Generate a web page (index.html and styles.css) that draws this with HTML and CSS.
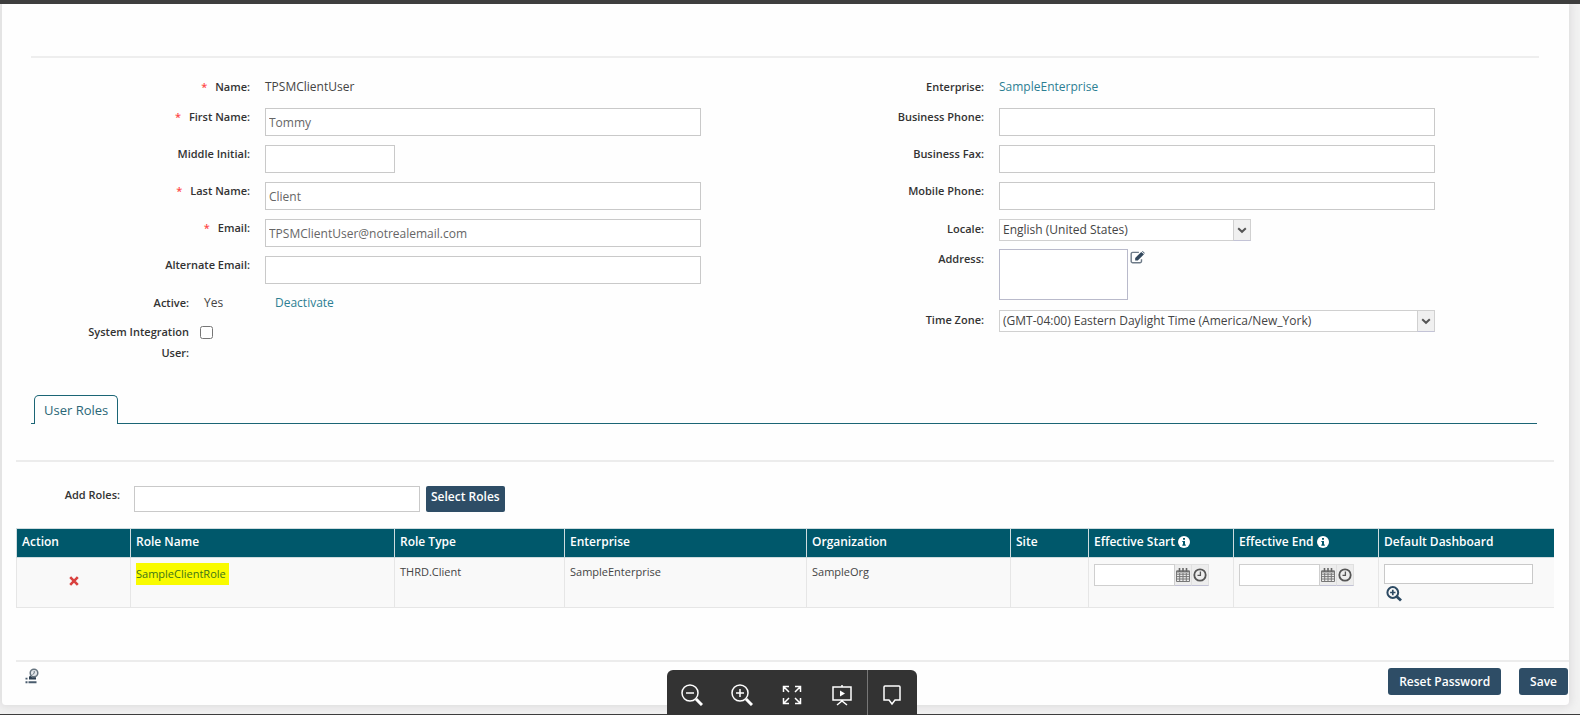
FILE: index.html
```html
<!DOCTYPE html>
<html lang="en">
<head>
<meta charset="utf-8">
<title>User Details</title>
<meta name="viewport" content="width=device-width, initial-scale=1">
<link rel="stylesheet" href="styles.css">
</head>
<body>
<main class="panel">
  <form class="details">
    <div class="column">
      <div class="row row-text"><span class="label"><span class="req">*</span>Name:</span><span class="value">TPSMClientUser</span></div>
      <div class="row"><label class="label" for="first"><span class="req">*</span>First Name:</label><input class="text" id="first" type="text" value="Tommy"></div>
      <div class="row"><label class="label" for="middle">Middle Initial:</label><input class="text text-short" id="middle" type="text"></div>
      <div class="row"><label class="label" for="last"><span class="req">*</span>Last Name:</label><input class="text" id="last" type="text" value="Client"></div>
      <div class="row"><label class="label" for="email"><span class="req">*</span>Email:</label><input class="text" id="email" type="text" value="TPSMClientUser@notrealemail.com"></div>
      <div class="row"><label class="label" for="alt">Alternate Email:</label><input class="text" id="alt" type="text"></div>
      <div class="row row-narrow row-active"><span class="label">Active:</span><span class="value status"><span>Yes</span><a class="link" href="#">Deactivate</a></span></div>
      <div class="row row-narrow row-check"><label class="label" for="sys">System Integration User:</label><input class="check" id="sys" type="checkbox"></div>
    </div>
    <div class="column">
      <div class="row row-text"><span class="label">Enterprise:</span><a class="link value" href="#">SampleEnterprise</a></div>
      <div class="row"><label class="label" for="phone">Business Phone:</label><input class="text" id="phone" type="text"></div>
      <div class="row"><label class="label" for="fax">Business Fax:</label><input class="text" id="fax" type="text"></div>
      <div class="row"><label class="label" for="mobile">Mobile Phone:</label><input class="text" id="mobile" type="text"></div>
      <div class="row row-select"><label class="label" for="locale">Locale:</label>
        <div class="select select-short"><select id="locale"><option>English (United States)</option></select><span class="arrow"><svg viewBox="0 0 10 7" width="10" height="7"><path d="M1.2 1.2 5 4.8 8.8 1.2"/></svg></span></div></div>
      <div class="row row-address"><label class="label" for="address">Address:</label>
        <div class="address"><textarea id="address"></textarea>
          <button class="icon" type="button" aria-label="Edit address"><svg viewBox="0 0 16 14" width="15" height="13"><path d="M9.5 1.5H3A1.7 1.7 0 0 0 1.200 3.200V11A1.700 1.700 0 0 0 3 12.700H10.500A1.700 1.700 0 0 0 12.300 11V9" fill="none" stroke="#6d7a87" stroke-width="1.500"/><path d="M5.500 10.200V7.500L12 1 15 3.600 8.300 10.200ZM12.800.300 13.500 0 15.800 2.200 15.500 2.900Z" fill="#34495e"/></svg></button></div></div>
      <div class="row row-select"><label class="label" for="zone">Time Zone:</label>
        <div class="select"><select id="zone"><option>(GMT-04:00) Eastern Daylight Time (America/New_York)</option></select><span class="arrow"><svg viewBox="0 0 10 7" width="10" height="7"><path d="M1.2 1.2 5 4.8 8.8 1.2"/></svg></span></div></div>
    </div>
  </form>

  <nav class="tabs"><button class="tab" type="button">User Roles</button></nav>

  <section class="roles">
    <div class="add">
      <label class="add-label" for="roles">Add Roles:</label>
      <input class="text add-input" id="roles" type="text">
      <button class="button button-tight" type="button">Select Roles</button>
    </div>
    <table class="grid">
      <colgroup><col class="c-action"><col class="c-role"><col class="c-type"><col class="c-ent"><col class="c-org"><col class="c-site"><col class="c-date"><col class="c-date"><col class="c-dash"></colgroup>
      <thead><tr>
        <th>Action</th><th>Role Name</th><th>Role Type</th><th>Enterprise</th><th>Organization</th><th>Site</th>
        <th>Effective Start <svg class="info" viewBox="0 0 12 12" width="12" height="12"><circle cx="6" cy="6" r="6" fill="#fff"/><path d="M5 2h2v1.700H5ZM4.300 4.900H7V8.500H7.800V9.700H4.300V8.500H5V6H4.300Z" fill="#00586b"/></svg></th>
        <th>Effective End <svg class="info" viewBox="0 0 12 12" width="12" height="12"><circle cx="6" cy="6" r="6" fill="#fff"/><path d="M5 2h2v1.700H5ZM4.300 4.900H7V8.500H7.800V9.700H4.300V8.500H5V6H4.300Z" fill="#00586b"/></svg></th>
        <th>Default Dashboard</th>
      </tr></thead>
      <tbody><tr>
        <td class="center"><button class="icon" type="button" aria-label="Remove role"><svg viewBox="0 0 10 10" width="10" height="10"><path d="M1.200 1.200 8.800 8.800M8.800 1.200 1.200 8.800" stroke="#d9413f" stroke-width="2.600"/></svg></button></td>
        <td><a class="marked" href="#">SampleClientRole</a></td>
        <td>THRD.Client</td>
        <td>SampleEnterprise</td>
        <td>SampleOrg</td>
        <td></td>
        <td><div class="date"><input type="text" aria-label="Effective start"><button type="button" aria-label="Pick start date"><svg viewBox="0 0 14 14" width="14" height="14"><path d="M.5 3H13.500V13.500H.5ZM.5 6.200H13.500M.5 8.600H13.500M.5 11H13.500M3.700 5V13.500M7 5V13.500M10.300 5V13.500" fill="none" stroke="#777"/><path d="M.5 2.500H13.500V4.500H.5Z" fill="#777"/><path d="M3.500 0V4M7 0V4M10.500 0V4" stroke="#666" stroke-width="1.600"/></svg></button><button type="button" aria-label="Pick start time"><svg viewBox="0 0 14 14" width="14" height="14"><circle cx="7" cy="7" r="5.700" fill="none" stroke="#555" stroke-width="1.800"/><path d="M7.400 3.500V7.400H4.500" fill="none" stroke="#555" stroke-width="1.300"/></svg></button></div></td>
        <td><div class="date"><input type="text" aria-label="Effective end"><button type="button" aria-label="Pick end date"><svg viewBox="0 0 14 14" width="14" height="14"><path d="M.5 3H13.500V13.500H.5ZM.5 6.200H13.500M.5 8.600H13.500M.5 11H13.500M3.700 5V13.500M7 5V13.500M10.300 5V13.500" fill="none" stroke="#777"/><path d="M.5 2.500H13.500V4.500H.5Z" fill="#777"/><path d="M3.500 0V4M7 0V4M10.500 0V4" stroke="#666" stroke-width="1.600"/></svg></button><button type="button" aria-label="Pick end time"><svg viewBox="0 0 14 14" width="14" height="14"><circle cx="7" cy="7" r="5.700" fill="none" stroke="#555" stroke-width="1.800"/><path d="M7.400 3.500V7.400H4.500" fill="none" stroke="#555" stroke-width="1.300"/></svg></button></div></td>
        <td><div class="dash"><input type="text" aria-label="Default dashboard"><button class="icon" type="button" aria-label="Find dashboard"><svg viewBox="0 0 16 16" width="16" height="16"><circle cx="6.800" cy="6.500" r="5.400" fill="none" stroke="#2c4a63" stroke-width="2"/><path d="M6.800 3.800V9.200M4.100 6.500H9.500" stroke="#2c4a63" stroke-width="1.700"/><path d="M10.700 10.500 15 14.600" stroke="#2c4a63" stroke-width="2.800"/></svg></button></div></td>
      </tr></tbody>
    </table>
  </section>

  <footer class="footer">
    <button class="icon" type="button" aria-label="Audit history"><svg viewBox="0 0 14 16" width="14" height="16"><circle cx="9" cy="5" r="3.800" fill="#e3e6ea" stroke="#66747f" stroke-width="1.500"/><path d="M9.200 3V5.300L7.500 6.500" fill="none" stroke="#66747f"/><path d="M5 7.500 7 9.300H11V11.500H4V9Z" fill="#2c3e50"/><path d="M.5 9.800H2.500V11.500H.5ZM.5 13.300H2.500V15.200H.5ZM3.500 13.300H11.500V15.200H3.500Z" fill="#4a5c6e"/></svg></button>
    <div class="actions"><button class="button" type="button">Reset Password</button><button class="button" type="button">Save</button></div>
  </footer>
</main>

<div class="viewer">
  <div class="viewer-bar">
    <button type="button" aria-label="Zoom out"><svg viewBox="0 0 22 22" width="22" height="22"><circle cx="9" cy="9" r="8"/><path d="M5 9H13"/><path class="thick" d="M15 15 21 21"/></svg></button>
    <button type="button" aria-label="Zoom in"><svg viewBox="0 0 22 22" width="22" height="22"><circle cx="9" cy="9" r="8"/><path d="M5 9H13M9 5V13"/><path class="thick" d="M15 15 21 21"/></svg></button>
    <button type="button" aria-label="Full screen"><svg viewBox="0 0 22 22" width="22" height="22"><path d="M2.500 8V2.500H8M2.500 2.500 8 8M14 2.500H19.500V8M19.500 2.500 14 8M2.500 14V19.500H8M2.500 19.500 8 14M14 19.500H19.500V14M19.500 19.500 14 14"/></svg></button>
    <button type="button" aria-label="Present"><svg viewBox="0 0 22 22" width="22" height="22"><path d="M2 3H20V16H2ZM11 1V3M11 16V17M6 21 11 17 16 21"/><path class="solid" d="M9 6.500 14 9.500 9 12.500Z"/></svg></button>
    <button class="divided" type="button" aria-label="Comment"><svg viewBox="0 0 22 22" width="22" height="22"><path d="M4 2H18A1 1 0 0 1 19 3V16H14L11 20 8 16H3V3A1 1 0 0 1 4 2Z"/></svg></button>
  </div>
</div>
</body>
</html>
```
FILE: styles.css
```css
* { box-sizing: border-box; }

body {
  margin: 0;
  min-height: 100vh;
  padding: 0 11px 9px 1px;
  border-top: 4px solid #3e3e3e;
  border-bottom: 1px solid #3e3e3e;
  background: #f2f2f2;
  color: #444;
  font: 12px/18px "Open Sans", "Noto Sans", sans-serif;
}

input, select, textarea, button { font: inherit; color: inherit; margin: 0; }
button { cursor: pointer; }
a { text-decoration: none; }
svg { display: block; }

.panel {
  padding-top: 52px;
  background: #fefefe;
  border-left: 1px solid #e4e4e4;
  border-radius: 0 0 4px 4px;
  box-shadow: 0 0 8px 2px #dddcdd;
}

.details {
  display: grid;
  grid-template-columns: 1fr 1fr;
  margin: 0 30px 0 29px;
  padding: 20px 40px 32px 0;
  border-top: 2px solid #eee;
}

.row {
  display: grid;
  grid-template-columns: 219px minmax(0, 1fr);
  column-gap: 15px;
  align-items: start;
  min-height: 37px;
  padding-right: 64px;
}
.row-text { min-height: 29px; }
.row-narrow { grid-template-columns: 158px minmax(0, 1fr); }
.row-active { min-height: 29px; padding-top: 2px; }
.row-check { min-height: 42px; column-gap: 11px; }
.row-select { min-height: 30px; }
.row-address { min-height: 61px; }

.label { justify-self: end; max-width: 118px; text-align: right; font-size: 11px; line-height: 20px; font-weight: 600; color: #333; }
.row-text .label, .row-active .label { line-height: 18px; }
.row-select .label, .row-address .label { line-height: 22px; }
.row-check .label { line-height: 21px; }
.req { margin-right: 8px; color: #ff4a4a; }
.status { display: grid; grid-template-columns: 71px auto; }
.link { color: #2d7f93; }

.text {
  width: 100%;
  height: 28px;
  margin-top: 1px;
  padding: 0 3px;
  border: 1px solid #c9c9c9;
  background: #fff;
  color: #666;
}
.text-short { width: 130px; }
.check { width: 13px; height: 13px; margin-top: 5px; }

.select { position: relative; height: 22px; margin-top: 1px; }
.select-short { width: 252px; }
.select select {
  width: 100%;
  height: 22px;
  padding: 0 20px 0 3px;
  border: 1px solid #d0d0d0;
  border-radius: 0;
  background: #fff;
  appearance: none;
}
.arrow {
  position: absolute;
  top: 0;
  right: 0;
  display: grid;
  place-items: center;
  width: 18px;
  height: 22px;
  border: 1px solid #d0d0d0;
  border-bottom-color: #c3c3d6;
  background: #f0f0f0;
  pointer-events: none;
}
.arrow path { fill: none; stroke: #555; stroke-width: 2; }

.address { display: flex; align-items: flex-start; gap: 2px; margin-top: 1px; }
.address textarea { width: 129px; height: 51px; border: 1px solid #b9bacb; background: #fff; resize: none; }
.icon { padding: 0; border: 0; background: none; }
.address .icon { padding-top: 2px; }

.tabs { display: flex; margin: 0 32px 0 29px; padding-left: 3px; border-bottom: 1px solid #1b6575; }
.tab {
  height: 29px;
  margin-bottom: -1px;
  padding: 0 9px;
  border: 1px solid #1b6575;
  border-bottom: 0;
  border-radius: 5px 5px 0 0;
  background: #fefefe;
  color: #2a6676;
  font-size: 13px;
  font-weight: 500;
}

.roles { margin: 36px 15px 0 14px; border-top: 2px solid #ececec; }
.add { display: flex; align-items: flex-start; gap: 6px; padding-top: 24px; }
.add-label { width: 104px; margin-right: 8px; text-align: right; font-size: 11px; font-weight: 600; color: #333; }
.add-input { width: 286px; height: 26px; margin-top: 0; }

.button {
  height: 27px;
  padding: 0 11px;
  border: 0;
  border-radius: 3px;
  background: #2e4d66;
  color: #fff;
  font-weight: 600;
}
.button-tight { height: 26px; padding: 0 5px 4px; border-radius: 2px; }

.grid { width: 100%; margin-top: 16px; border-collapse: collapse; table-layout: fixed; }
.c-action { width: 114px; }
.c-role { width: 264px; }
.c-type { width: 170px; }
.c-ent { width: 242px; }
.c-org { width: 204px; }
.c-site { width: 78px; }
.c-date { width: 145px; }
.grid th, .grid td { padding: 4px 5px; border: 1px solid #e2e2e2; text-align: left; vertical-align: top; }
.grid th { height: 29px; border-color: #cfdcdf; background: #00586b; color: #fff; font-weight: 600; font-size: 12px; white-space: nowrap; }
.grid td { height: 50px; padding-top: 5px; border-color: #e6e6e6; background: #f9f9f9; font-size: 11px; }
.grid th:last-child, .grid td:last-child { border-right: 0; }
.grid .center { padding-bottom: 6px; text-align: center; vertical-align: middle; }
.info { display: inline-block; vertical-align: -2px; }
.marked { display: inline-block; height: 22px; padding: 2px 3px 2px 0; background: #f9fb00; color: #3d7519; }

.date { display: flex; margin-top: 1px; }
.date input { width: 81px; height: 22px; border: 1px solid #cfcfcf; background: #fff; }
.date button {
  display: grid;
  place-items: center;
  width: 17px;
  height: 22px;
  padding: 0;
  border: 1px solid #e0e0e0;
  border-left: 0;
  border-bottom-color: #c3c3d6;
  background: #ededed;
}
.dash { display: grid; justify-items: start; gap: 2px; margin-top: 1px; }
.dash input { width: 149px; height: 20px; border: 1px solid #c9c9c9; background: #fff; }
.dash .icon { margin-left: 2px; }

.footer { display: flex; justify-content: space-between; align-items: flex-start; margin: 52px 0 0 14px; padding: 6px 1px 10px 9px; border-top: 2px solid #ececec; }
.actions { display: flex; gap: 18px; }

.viewer { position: fixed; inset: auto 0 0; display: flex; justify-content: center; padding-left: 3px; pointer-events: none; }
.viewer-bar { display: flex; height: 45px; border-radius: 6px 6px 0 0; background: #333; pointer-events: auto; }
.viewer-bar button { display: grid; place-items: center; width: 50px; padding: 4px 0 0; border: 0; background: none; }
.viewer-bar .divided { border-left: 1px solid #777; }
.viewer-bar path, .viewer-bar circle { fill: none; stroke: #fff; stroke-width: 1.5; }
.viewer-bar .thick { stroke-width: 3; }
.viewer-bar .solid { fill: #fff; stroke: none; }
```
